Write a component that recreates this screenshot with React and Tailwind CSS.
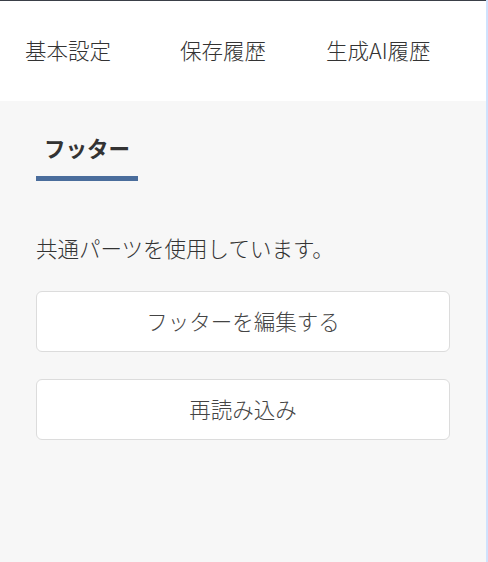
const tabs = ['基本設定', '保存履歴', '生成AI履歴']

export default function App() {
  return (
    <div className="flex h-[562px] w-[488px] overflow-hidden" style={{ fontFamily: '"Noto Sans CJK JP", "Noto Sans", sans-serif' }}>
      <div className="flex flex-1 flex-col bg-[#f7f7f7]">
        <header className="flex h-[101px] items-center border-t border-[#3a3f47] bg-white pb-[2px] pl-[25px] text-[21.5px] font-light leading-[32px] text-[#333]">
          <span>{tabs[0]}</span>
          <span className="ml-[69px]">{tabs[1]}</span>
          <span className="ml-[60px]">{tabs[2]}</span>
        </header>

        <div className="px-[36px]">
          <div className="flex">
            <div className="border-b-[5px] border-[#4a6d9c] px-[8px] pb-[12px] pt-[31px] text-[21.5px] font-bold leading-[32px] text-[#333]">
              フッター
            </div>
          </div>

          <p className="mt-[51px] text-[21.5px] font-light leading-[32px] text-[#333]">共通パーツを使用しています。</p>

          <div className="mt-[27px] flex flex-col gap-[27px]">
            {['フッターを編集する', '再読み込み'].map((label) => (
              <button key={label} className="h-[61px] w-full rounded-[6px] border border-[#dcdcdc] bg-white text-[21.5px] font-light text-[#444]">
                {label}
              </button>
            ))}
          </div>
        </div>
      </div>
      <div className="w-[2px] bg-[#cfe2fd]" />
    </div>
  )
}
